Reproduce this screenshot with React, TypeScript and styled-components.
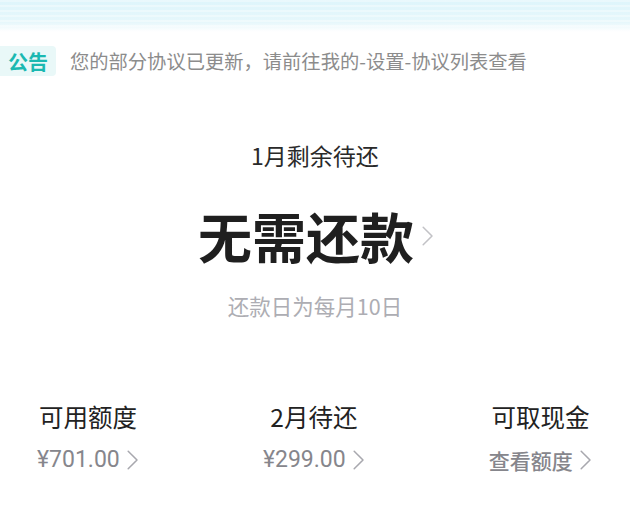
import React from 'react'
import styled, { createGlobalStyle } from 'styled-components'

const Global = createGlobalStyle`
  body {
    margin: 0;
    background: #fff;
    font-family: "Noto Sans CJK SC", "Noto Sans", sans-serif;
  }
`
const Page = styled.div`
  width: 630px;
  height: 521px;
  overflow: hidden;
  display: flex;
  flex-direction: column;
`
const TopBand = styled.div`
  height: 32px;
  background:
    repeating-linear-gradient(180deg, rgba(255,255,255,0.35) 0 2px, rgba(255,255,255,0) 2px 5px),
    linear-gradient(180deg, #def5fb 0%, #e6f7fb 70%, #ffffff 100%);
`
const Notice = styled.div`
  display: flex;
  align-items: center;
  margin-top: 14px;
  height: 30px;
  gap: 14px;
`
const Badge = styled.span`
  height: 30px;
  width: 56px;
  display: flex;
  align-items: center;
  justify-content: center;
  background: #e9f8f8;
  border-radius: 0 4px 4px 0;
  color: #1bb8b1;
  font-weight: 700;
  font-size: 20px;
`
const NoticeText = styled.span`
  color: #8c8c8c;
  font-size: 19.3px;
`
const Summary = styled.div`
  display: flex;
  flex-direction: column;
  align-items: center;
  margin-top: 64px;
`
const Month = styled.div`
  font-size: 23px;
  color: #2a2a2a;
  line-height: 30px;
`
const BigRow = styled.div`
  display: flex;
  align-items: center;
  gap: 7px;
  margin-top: 36px;
  margin-left: 2px;
`
const Big = styled.div`
  font-size: 54px;
  font-weight: 700;
  color: #1f1f1f;
  line-height: 60px;
`
const DueDay = styled.div`
  margin-top: 26px;
  font-size: 21.5px;
  color: #adadb3;
  line-height: 28px;
`
const Stats = styled.div`
  display: flex;
  justify-content: space-between;
  padding: 0 38px 0 37px;
  margin-top: 83px;
`
const Stat = styled.div`
  display: flex;
  flex-direction: column;
  align-items: center;
  gap: 15px;
`
const Label = styled.div`
  font-size: 24.5px;
  color: #222;
  line-height: 28px;
`
const Value = styled.div<{ $bold?: boolean }>`
  display: flex;
  align-items: center;
  gap: 6px;
  font-size: ${(p) => (p.$bold ? '21px' : '23px')};
  line-height: 28px;
  color: #86868c;
  font-family: ${(p) => (p.$bold ? '"Noto Sans CJK SC", sans-serif' : 'Roboto, "Noto Sans CJK SC", sans-serif')};
  font-weight: ${(p) => (p.$bold ? 500 : 400)};
`

function Chevron({ size = 22, color = '#a8a8ae' }: { size?: number; color?: string }) {
  return (
    <svg width={size * 0.6} height={size} viewBox="0 0 12 20" fill="none">
      <polyline points="2,2 10,10 2,18" stroke={color} strokeWidth="1.4" strokeLinecap="round" strokeLinejoin="round" />
    </svg>
  )
}

function App() {
  return (
    <Page>
      <Global />
      <TopBand />
      <Notice>
        <Badge>公告</Badge>
        <NoticeText>您的部分协议已更新，请前往我的-设置-协议列表查看</NoticeText>
      </Notice>
      <Summary>
        <Month>1月剩余待还</Month>
        <BigRow>
          <Big>无需还款</Big>
          <Chevron size={22} color="#c2c2c6" />
        </BigRow>
        <DueDay>还款日为每月10日</DueDay>
      </Summary>
      <Stats>
        <Stat>
          <Label>可用额度</Label>
          <Value>¥701.00 <Chevron /></Value>
        </Stat>
        <Stat>
          <Label>2月待还</Label>
          <Value>¥299.00 <Chevron /></Value>
        </Stat>
        <Stat>
          <Label>可取现金</Label>
          <Value $bold>查看额度 <Chevron /></Value>
        </Stat>
      </Stats>
    </Page>
  )
}

export default App
